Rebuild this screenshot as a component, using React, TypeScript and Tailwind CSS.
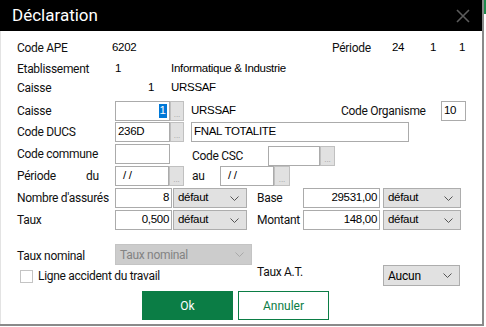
import React from "react";

const lab = "font-['Roboto',sans-serif] text-[12px] tracking-[-0.3px] text-[#111] leading-none whitespace-nowrap";
const val = "font-['Liberation_Sans',Arial,sans-serif] text-[11.5px] tracking-[-0.3px] text-black leading-none whitespace-nowrap";

function Dots({ w = "w-[14px]" }: { w?: string }) {
  return (
    <div className={`${w} h-full shrink-0 bg-[#e1e1e1] border border-[#c0c0c0] flex items-end justify-center`}>
      <span className="text-[8px] leading-[10px] text-[#a0a0a0] font-['Liberation_Sans',sans-serif]">...</span>
    </div>
  );
}

function Box({ w, right, children, pl = "pl-[2px]" }: { w: string; right?: boolean; children?: React.ReactNode; pl?: string }) {
  return (
    <div className={`${w} h-full shrink-0 border border-[#ababab] bg-white flex items-center ${right ? "justify-end pr-[2px]" : pl} ${val}`}>
      {children}
    </div>
  );
}

function Sel({ w, children, disabled, big }: { w: string; children: React.ReactNode; disabled?: boolean; big?: boolean }) {
  return (
    <div
      className={`${w} h-full shrink-0 border flex items-center justify-between pl-[4px] pr-[7px] whitespace-nowrap ${
        disabled
          ? "bg-[#cccccc] border-[#c4c4c4] text-[#838383] font-['Roboto',sans-serif] text-[12px] tracking-[-0.3px]"
          : big
          ? "bg-[#e1e1e1] border-[#adadad] text-black font-['Roboto',sans-serif] text-[12px] tracking-[-0.2px]"
          : "bg-[#e1e1e1] border-[#adadad] text-black font-['Liberation_Sans',sans-serif] text-[11.5px] tracking-[-0.3px]"
      }`}
    >
      <span className="leading-none">{children}</span>
      <svg width="9" height="5" viewBox="0 0 9 5">
        <path d="M0.5 0.5 L4.5 4.5 L8.5 0.5" fill="none" stroke={disabled ? "#a9a9a9" : "#555"} strokeWidth="1" />
      </svg>
    </div>
  );
}

export default function App() {
  return (
    <div className="w-[486px] h-[327px] bg-white relative overflow-hidden flex">
      <div className="w-[484px] h-[326px] shrink-0 flex flex-col border-r-2 border-b-2 border-[#8a8a8a]">
        <div className="h-[31px] bg-black flex items-center justify-between pl-[12px] pr-[12px] shrink-0">
          <span className="text-white text-[17px] leading-none font-['Roboto',sans-serif]">Déclaration</span>
          <svg width="14" height="14" viewBox="0 0 14 14">
            <path d="M1 1 L13 13 M13 1 L1 13" stroke="#5c5c5c" strokeWidth="1.6" fill="none" />
          </svg>
        </div>
        <div className="flex-1 border-l border-[#e3e3e3] pl-[16px] flex flex-col">
          {/* Row 1 */}
          <div className="flex items-center h-[16px] mt-[9px]">
            <span className={`w-[95px] ${lab}`}>Code APE</span>
            <span className={`w-[220px] ${val}`}>6202</span>
            <span className={`w-[60px] ${lab}`}>Période</span>
            <span className={`w-[38px] ${val}`}>24</span>
            <span className={`w-[29px] ${val}`}>1</span>
            <span className={val}>1</span>
          </div>
          <div className="flex items-center h-[16px] mt-[5px]">
            <span className={`w-[98px] ${lab}`}>Etablissement</span>
            <span className={`w-[56px] ${val}`}>1</span>
            <span className={val}>Informatique &amp; Industrie</span>
          </div>
          <div className="flex items-center h-[16px] mt-[3px]">
            <span className={`w-[131px] ${lab}`}>Caisse</span>
            <span className={`w-[23px] ${val}`}>1</span>
            <span className={val}>URSSAF</span>
          </div>

          {/* Caisse input row */}
          <div className="flex items-center h-[20px] mt-[5px]">
            <span className={`w-[98px] ${lab}`}>Caisse</span>
            <div className="w-[55px] h-full shrink-0 border border-[#ababab] bg-white flex items-center justify-end pr-[2px]">
              <span className="bg-[#0078d7] text-white px-[1px] h-[14px] flex items-center font-['Liberation_Sans',sans-serif] text-[11.5px] leading-none">1</span>
            </div>
            <Dots />
            <span className={`ml-[7px] w-[150px] ${val}`}>URSSAF</span>
            <span className={`w-[100px] ${lab}`}>Code Organisme</span>
            <Box w="w-[25px]">10</Box>
          </div>

          {/* Code DUCS */}
          <div className="flex items-center h-[20px] mt-[1px]">
            <span className={`w-[98px] ${lab}`}>Code DUCS</span>
            <Box w="w-[55px]">236D</Box>
            <Dots />
            <div className="ml-[7px]" />
            <Box w="w-[218px]">FNAL TOTALITE</Box>
          </div>

          {/* Code commune */}
          <div className="flex items-center h-[20px] mt-[2px]">
            <span className={`w-[98px] ${lab}`}>Code commune</span>
            <Box w="w-[55px]" />
            <span className={`ml-[22px] w-[76px] ${lab} mt-[4px]`}>Code CSC</span>
            <div className="flex h-full mt-[3px]">
              <Box w="w-[52px]" />
              <Dots w="w-[15px]" />
            </div>
          </div>

          {/* Période */}
          <div className="flex items-center h-[20px] mt-[2px]">
            <span className={`w-[69px] ${lab}`}>Période</span>
            <span className={`w-[29px] ${lab}`}>du</span>
            <Box w="w-[54px]" pl="pl-[7px]">/ /</Box>
            <Dots w="w-[15px]" />
            <span className={`ml-[8px] w-[28px] ${lab}`}>au</span>
            <Box w="w-[54px]" pl="pl-[7px]">/ /</Box>
            <Dots w="w-[16px]" />
          </div>

          {/* Nombre d'assurés */}
          <div className="flex items-center h-[20px] mt-[2px]">
            <span className={`w-[98px] ${lab}`}>Nombre d'assurés</span>
            <Box w="w-[57px]" right>8</Box>
            <div className="ml-[1px]" />
            <Sel w="w-[74px]">défaut</Sel>
            <span className={`ml-[10px] w-[46px] ${lab}`}>Base</span>
            <Box w="w-[77px]" right>29531,00</Box>
            <div className="ml-[3px]" />
            <Sel w="w-[78px]">défaut</Sel>
          </div>

          {/* Taux */}
          <div className="flex items-center h-[20px] mt-[2px]">
            <span className={`w-[98px] ${lab}`}>Taux</span>
            <Box w="w-[57px]" right>0,500</Box>
            <div className="ml-[1px]" />
            <Sel w="w-[74px]">défaut</Sel>
            <span className={`ml-[10px] w-[46px] ${lab}`}>Montant</span>
            <Box w="w-[77px]" right>148,00</Box>
            <div className="ml-[3px]" />
            <Sel w="w-[78px]">défaut</Sel>
          </div>

          {/* Taux nominal */}
          <div className="flex items-center h-[21px] mt-[14px]">
            <span className={`w-[98px] ${lab} mt-[2px]`}>Taux nominal</span>
            <Sel w="w-[137px]" disabled>Taux nominal</Sel>
          </div>

          {/* Checkbox + Taux A.T. */}
          <div className="flex h-[21px]">
            <div className="w-[240px] flex items-center shrink-0">
              <div className="ml-[3px] w-[13px] h-[13px] border border-[#c4c4c4] bg-white mt-[1px]" />
              <span className={`ml-[5px] ${lab}`}>Ligne accident du travail</span>
            </div>
            <span className={`w-[126px] ${lab} mt-[1px]`}>Taux A.T.</span>
            <Sel w="w-[77px]" big>Aucun</Sel>
          </div>

          {/* Buttons */}
          <div className="flex h-[29px] mt-[5px]">
            <div className="ml-[125px] w-[91px] h-full bg-[#0b7d45] flex items-center justify-center text-white text-[12px] font-['Roboto',sans-serif]">Ok</div>
            <div className="ml-[5px] w-[91px] h-full border border-[#0b7d45] bg-white flex items-center justify-center text-[#0b7d45] text-[12px] font-['Roboto',sans-serif]">Annuler</div>
          </div>
        </div>
      </div>
      <div className="w-[2px] h-[14px] bg-[#1e8a4c] shrink-0" />
    </div>
  );
}
